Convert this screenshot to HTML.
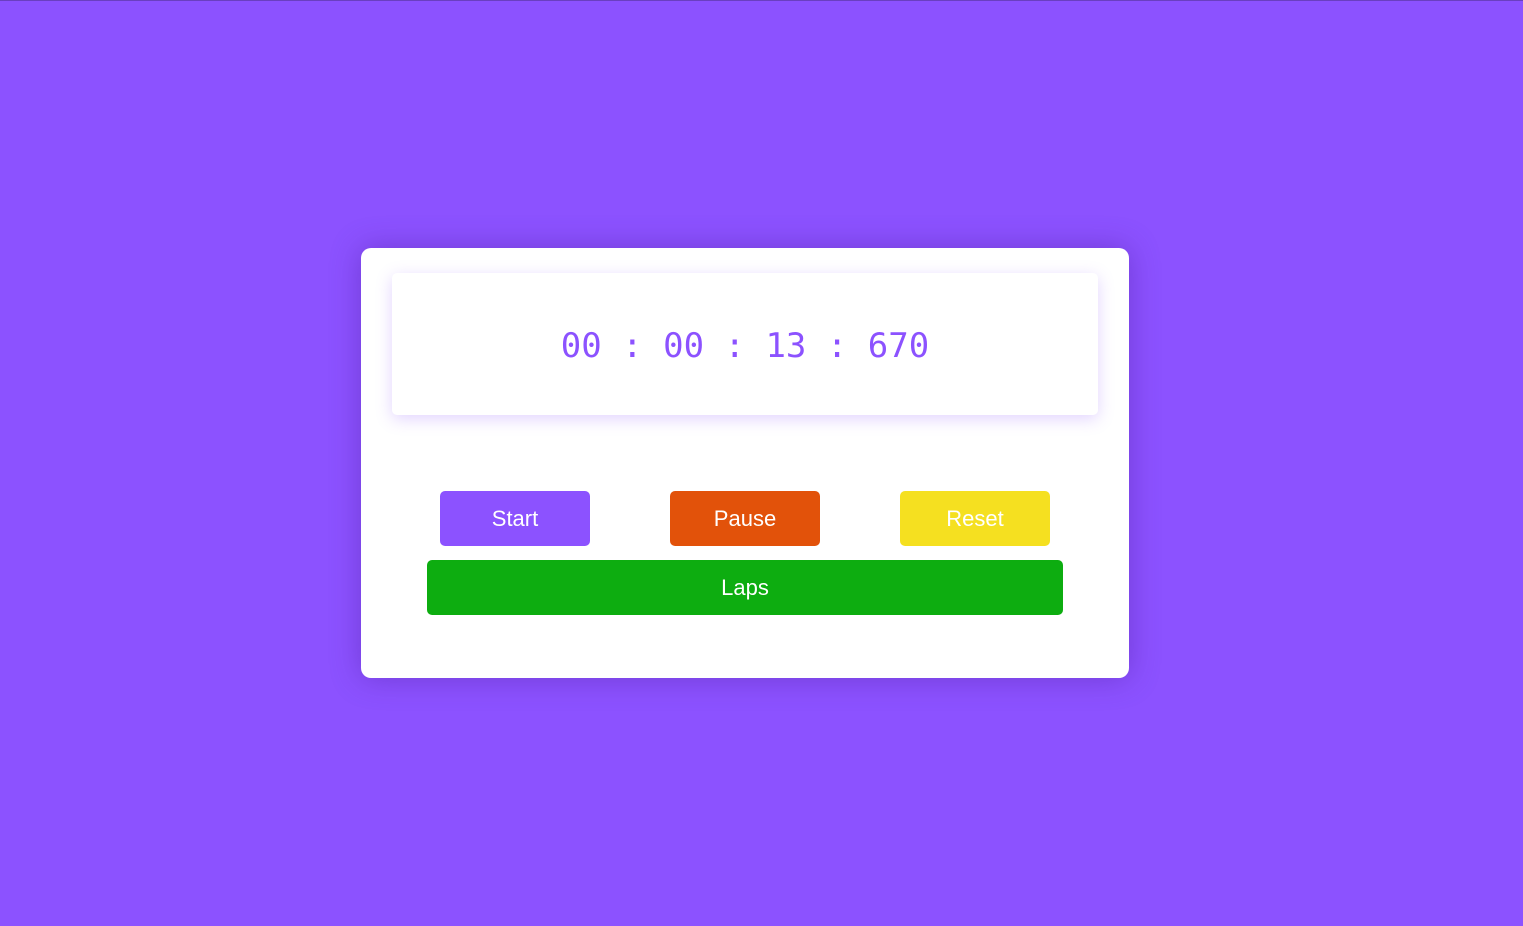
<!DOCTYPE html>
<html><head><style>
html,body{margin:0;padding:0;}
body{width:1523px;height:926px;background:#8c52ff;position:relative;overflow:hidden;font-family:"Liberation Sans",Arial,sans-serif;border-top:1px solid #6a3fc0;box-sizing:border-box;}
.card{position:absolute;left:361px;top:247px;width:768px;height:430px;background:#fff;border-radius:10px;box-shadow:0 0 30px rgba(80,30,160,.45);}
.disp{position:absolute;left:31px;top:25px;width:706px;height:142px;background:#fff;border-radius:5px;box-shadow:0 4px 16px rgba(140,82,255,.25);display:flex;align-items:center;justify-content:center;}
.disp span{font-family:"DejaVu Sans Mono","Liberation Mono",monospace;font-size:34px;color:#8c52ff;white-space:pre;position:relative;top:2px;}
.btn{position:absolute;height:55px;border-radius:5px;color:#fff;font-size:22px;display:flex;align-items:center;justify-content:center;}
</style></head><body>
<div class="card">
<div class="disp"><span>00 : 00 : 13 : 670</span></div>
<div class="btn" style="left:79px;top:243px;width:150px;background:#8c52ff">Start</div>
<div class="btn" style="left:309px;top:243px;width:150px;background:#e2520a">Pause</div>
<div class="btn" style="left:539px;top:243px;width:150px;background:#f5e020">Reset</div>
<div class="btn" style="left:66px;top:312px;width:636px;background:#0dad10">Laps</div>
</div>
</body></html>
